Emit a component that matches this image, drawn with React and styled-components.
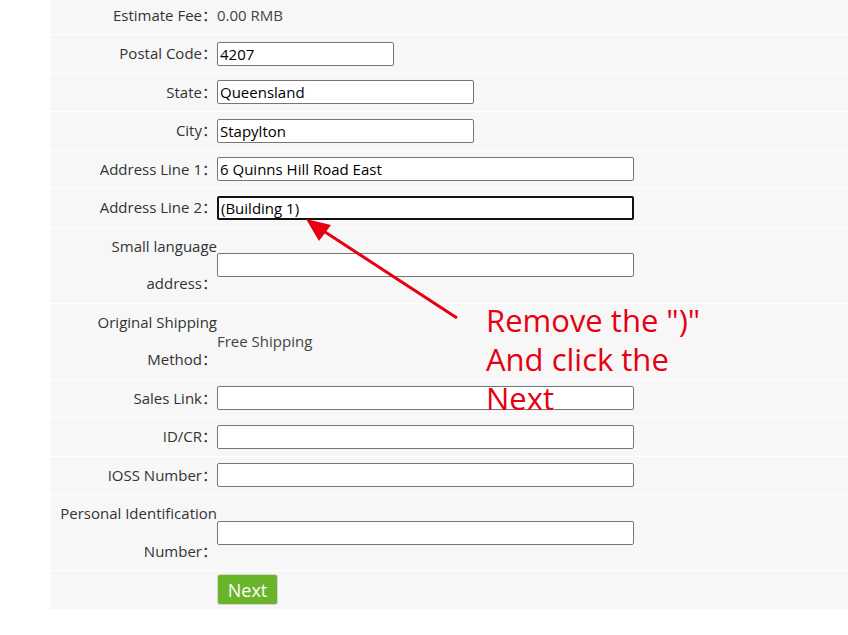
import styled, { createGlobalStyle } from 'styled-components'

const GlobalStyle = createGlobalStyle`
    html, body {
        margin: 0;
        background: #fff;
        font-family: "Open Sans", "Noto Sans CJK SC", sans-serif;
    }
`

const Page = styled.div`
    position: relative;
    height: 635px;
    overflow: hidden;
    padding-left: 50px;
`

const Form = styled.div`
    display: grid;
    gap: 1px;
    background: #fff;
    margin-top: -3.5px;
`

const Row = styled.div`
    display: grid;
    grid-template-columns: 167px 1fr;
    align-items: center;
    min-height: 37.5px;
    background: #f7f7f7;
`

const Label = styled.div`
    text-align: right;
    font-size: 15px;
    line-height: 37.5px;
    color: #333;
`

const Value = styled.div`
    font-size: 15px;
    color: #444;
`

const Input = styled.input`
    box-sizing: border-box;
    width: ${({ $w }) => $w}px;
    height: 24px;
    margin: 0;
    padding: 0 2px;
    font-family: "Open Sans", sans-serif;
    font-size: 15px;
    color: #000;
    background: #fff;
    border: ${({ $focus }) => ($focus ? '2px solid #111' : '1px solid #767676')};
    border-radius: 2px;
    outline: none;
`

const NextButton = styled.button`
    width: 61px;
    height: 31px;
    padding: 0;
    font-family: "Open Sans", sans-serif;
    font-size: 18px;
    color: #fff;
    background: #6ab42a;
    border: 1px solid #d6d6d6;
    border-radius: 3px;
`

const Note = styled.div`
    position: absolute;
    left: 486px;
    top: 301px;
    font-size: 31px;
    line-height: 39px;
    color: #e60012;
    white-space: pre;
`

const Arrow = styled.svg`
    position: absolute;
    left: 0;
    top: 0;
    pointer-events: none;
`

const fields = [
    { label: 'Postal Code', value: '4207', w: 177 },
    { label: 'State', value: 'Queensland', w: 257 },
    { label: 'City', value: 'Stapylton', w: 257 },
    { label: 'Address Line 1', value: '6 Quinns Hill Road East', w: 417 },
    { label: 'Address Line 2', value: '(Building 1)', w: 417, focus: true },
    { label: 'Small language address', value: '', w: 417 },
]

const extra = ['Sales Link', 'ID/CR', 'IOSS Number', 'Personal Identification Number']

const App = () => {
    return (
        <>
            <GlobalStyle />
            <Page>
                <Form>
                    <Row>
                        <Label>Estimate Fee：</Label>
                        <Value>0.00 RMB</Value>
                    </Row>
                    {fields.map((f) => (
                        <Row key={f.label}>
                            <Label>{f.label}：</Label>
                            <div>
                                <Input $w={f.w} $focus={f.focus} defaultValue={f.value} />
                            </div>
                        </Row>
                    ))}
                    <Row>
                        <Label>Original Shipping Method：</Label>
                        <Value>Free Shipping</Value>
                    </Row>
                    {extra.map((label) => (
                        <Row key={label}>
                            <Label>{label}：</Label>
                            <div>
                                <Input $w={417} />
                            </div>
                        </Row>
                    ))}
                    <Row>
                        <div />
                        <div>
                            <NextButton>Next</NextButton>
                        </div>
                    </Row>
                </Form>
                <Arrow width="848" height="635">
                    <line x1="457" y1="318" x2="322" y2="230" stroke="#e60012" strokeWidth="3" />
                    <polygon points="306,219 331,225 319,241" fill="#e60012" />
                </Arrow>
                <Note>{'Remove the ")"\nAnd click the\nNext'}</Note>
            </Page>
        </>
    )
}

export default App
